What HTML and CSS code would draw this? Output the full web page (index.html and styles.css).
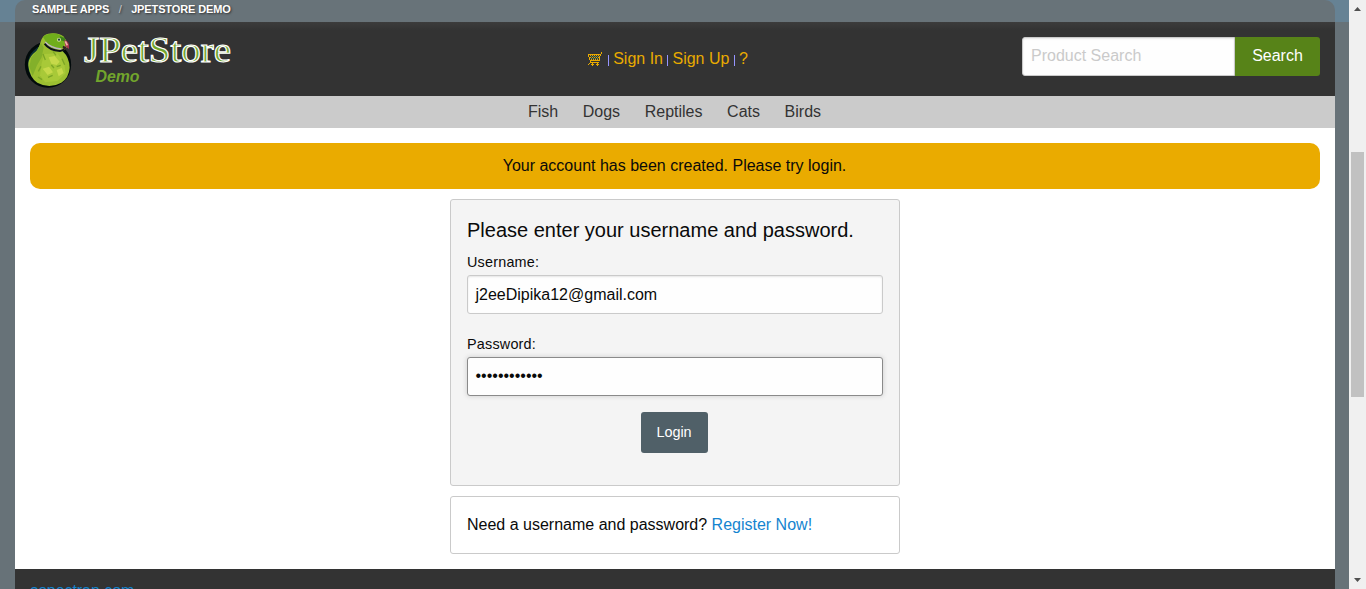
FILE: index.html
```html
<!DOCTYPE html>
<html lang="en">
<head>
<meta charset="utf-8">
<title>JPetStore Demo</title>
<link rel="stylesheet" href="styles.css">
</head>
<body>
<div class="viewport">
  <div class="page">
    <div class="backdrop"></div>
    <nav class="crumbs"><a>SAMPLE APPS</a><i>/</i><a>JPETSTORE DEMO</a></nav>
    <header class="header">
      <svg class="logo" width="220" height="66" viewBox="0 0 220 66">
        <g transform="translate(5 -4) scale(.3333)">
          <circle cx="84" cy="116" r="65" fill="#0b3033" stroke="#020a0b" stroke-width="9"/>
          <path d="M72 29C88 18 116 20 130 31L139 45 142 63 128 76Q148 94 149 125 147 155 124 170 88 190 52 170 29 155 25 119C24 96 39 83 50 74 62 62 59 42 72 29Z" fill="#9cbf31"/>
          <path d="M69 32Q86 20 111 23L130 32 138 43 130 65 109 70 85 60Z" fill="#70ae1b"/>
          <path d="M63 50L48 78 34 94 28 122 38 150 51 118 65 94 71 65Z" fill="#83b02a"/>
          <path d="M73 84L112 82 132 108 137 142 112 165 75 169 60 148 65 112Z" fill="#a8c938"/>
          <path d="M86 94l18-4 15 17-9 10-16-4zM68 128l19-6 12 17-16 8zM110 132l15-6 6 15-15 10z" fill="#c6d94a"/>
          <path d="M69 84l7 18M99 76l9 12M94 117l8 9M63 121l-8 15M84 154l14-6M110 122l12-4M54 153l12 8M126 98l8 18" stroke="#7ba526" stroke-width="4"/>
          <path d="M74 53Q88 73 120 75L133 71" fill="none" stroke="#0a1018" stroke-width="6"/>
          <path d="M76 48Q91 66 124 69" fill="none" stroke="#bdb5c2" stroke-width="4"/>
          <path d="M119 31l15 5 3 11-15-4z" fill="#3d821a"/>
          <circle cx="117" cy="41" r="6" fill="#d7e0a0"/><circle cx="117" cy="41" r="3.500" fill="#204938"/>
          <path d="M133 42Q150 45 147 69L136 61Z" fill="#aa3450"/><path d="M136 46l6 12" stroke="#efb5aa" stroke-width="5"/>
          <path d="M129 59l10 4-3 9-8-5z" fill="#332024"/>
        </g>
        <text class="logo-name" x="69" y="31.500" textLength="147" lengthAdjust="spacingAndGlyphs">JPetStore</text>
        <text class="logo-demo" x="80.500" y="52" textLength="44" lengthAdjust="spacingAndGlyphs">Demo</text>
      </svg>
      <nav class="account">
        <svg width="15" height="14" viewBox="0 0 15 14" shape-rendering="crispEdges" fill="none" stroke="#e9ab00">
          <path d="M1 2.500h13M14.500 0v2M1.500 3v2M2.500 5v3M13.500 3v1M12.500 4v4M3 8.500h10M3.500 9v2M4 10.500h8M2 11.500h1M1 12.500h1M4 12.500h3M5.500 11v3M9 12.500h3M10.500 11v3"/>
          <path d="M3 3.500h10M4 7.500h8" stroke-dasharray="1 1"/><path d="M4 4.500h8M4 6.500h8" stroke="#53905b" stroke-dasharray="1 1"/><path d="M3 5.500h9" stroke-dasharray="1 1"/>
        </svg><b></b><a>Sign In</a><b></b><a>Sign Up</a><b></b><a>?</a>
      </nav>
      <form class="search"><input placeholder="Product Search"><button type="button">Search</button></form>
    </header>
    <nav class="categories"><a>Fish</a><a>Dogs</a><a>Reptiles</a><a>Cats</a><a>Birds</a></nav>
    <main class="main">
      <p class="notice">Your account has been created. Please try login.</p>
      <section class="panel login">
        <h1>Please enter your username and password.</h1>
        <label>Username:</label>
        <div class="field">j2eeDipika12@gmail.com</div>
        <label>Password:</label>
        <div class="field focused">••••••••••••</div>
        <button class="submit">Login</button>
      </section>
      <section class="panel register">Need a username and password? <a>Register Now!</a></section>
    </main>
    <footer class="footer"><a>aspectran.com</a></footer>
  </div>
  <div class="scrollbar">
    <svg width="9" height="5" viewBox="0 0 9 5"><path d="M1 5L4.500 1 8 5z" fill="#505050"/></svg>
    <div class="thumb"></div>
    <svg width="9" height="5" viewBox="0 0 9 5"><path d="M1 0L4.500 4 8 0z" fill="#505050"/></svg>
  </div>
</div>
</body>
</html>
```
FILE: styles.css
```css
* { box-sizing: border-box; }
body { margin: 0; overflow: hidden; font: 16px/24px "Liberation Sans", Arial, sans-serif; color: #0a0a0a; }
.viewport { display: flex; height: 589px; overflow: hidden; background: #677278; }
.page { position: relative; width: 1349px; padding: 0 14px 0 15px; }
.backdrop { position: absolute; top: 0; left: 0; width: 1349px; height: 22px; background: #668294; }
.crumbs { position: relative; display: flex; height: 22px; padding-left: 17px; background: #687379; border-radius: 10px 10px 0 0; color: #fff; font-size: 11px; font-weight: bold; line-height: 18px; letter-spacing: -.12px; white-space: nowrap; text-shadow: 1px 1px 2px #333; }
.crumbs i { width: 22px; text-align: center; font-style: normal; font-weight: normal; color: #cacaca; }
.header { display: flex; position: relative; height: 74px; padding: 4px 15px 0 0; background: linear-gradient(#3c3c3c, #333 8px); }
.logo { margin-top: 4px; }
.logo-name { font: 35px "Liberation Serif", serif; fill: #72a52c; stroke: #fff; stroke-width: 1.1px; }
.logo-demo { font: italic bold 16px "Liberation Sans", sans-serif; fill: #72a52c; }
.account { display: flex; height: 24px; margin: 21px auto 0 352px; align-items: center; color: #e9ab00; white-space: nowrap; }
.account svg { margin-right: 6px; }
.account b { width: 1px; height: 11px; margin-top: 3px; background: #9595ff; }
.account a { margin: 0 4.3px 0 4.2px; }
.search { display: flex; width: 298px; height: 39px; margin-top: 11px; }
.search input { width: 213px; height: 39px; padding: 0 8px 2px; border: 1px solid #cacaca; border-radius: 3px 0 0 3px; box-shadow: inset 0 1px 2px rgba(10,10,10,.1); font: inherit; background: #fefefe; }
.search input::placeholder { color: #cacaca; opacity: 1; }
.search button { width: 85px; border: 0; padding: 0 0 2px; border-radius: 0 3px 3px 0; background: #578318; color: #fff; font: inherit; }
.categories { display: flex; height: 32px; justify-content: center; gap: 24.6px; padding-right: 1px; background: #cbcbcb; color: #333; line-height: 31px; }
.main { display: flex; flex-direction: column; align-items: center; height: 441px; padding: 15px; background: #fff; }
.notice { width: 1290px; height: 46px; margin: 0 0 10px; padding-right: 1px; border-radius: 10px; background: #eaab00; text-align: center; line-height: 45px; }
.panel { width: 450px; border: 1px solid #cacaca; border-radius: 3px; padding: 0 16px; }
.login { height: 287px; margin-bottom: 10px; background: #f4f4f4; }
.login h1 { margin: 16px 0 6px; font-size: 20px; font-weight: normal; line-height: 28px; white-space: nowrap; }
.login label { display: block; height: 25px; font-size: 14.4px; line-height: 25px; letter-spacing: .2px; }
.field { height: 39px; margin-bottom: 18px; padding: 0 7.5px; border: 1px solid #cacaca; border-radius: 3px; background: #fefefe; line-height: 37px; box-shadow: inset 0 1px 2px rgba(10,10,10,.1); }
.focused { margin-bottom: 16px; line-height: 35px; border-color: #8a8a8a; box-shadow: 0 0 5px #cacaca; }
.submit { display: block; position: relative; left: -1px; width: 67px; height: 41px; margin: 0 auto; padding: 0 0 1px; border: 0; border-radius: 3px; background: #506068; color: #fff; font: 14.4px "Liberation Sans", sans-serif; }
.register { height: 58px; line-height: 55px; }
.register a { color: #1584cf; }
.footer { height: 80px; padding: 10px 15px; background: #333; color: #1584cf; letter-spacing: -.05px; }
.scrollbar { display: flex; flex-direction: column; align-items: center; width: 17px; height: 589px; padding: 6px 0; background: #f0f0f0; }
.thumb { width: 13px; height: 245px; margin: 141px 0 auto; background: #c1c1c1; }
```
